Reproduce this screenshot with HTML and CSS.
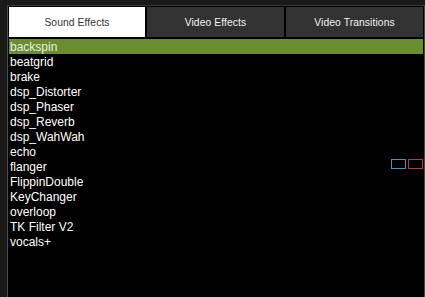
FILE: index.html
```html
<!DOCTYPE html>
<html lang="en">

<head>
    <meta charset="UTF-8">
    <title>Effects</title>
    <link rel="stylesheet" href="styles.css">
</head>

<body>

    <div class="frame">
        <div class="tabs">
            <div class="tab active">Sound Effects</div>
            <div class="tab">Video Effects</div>
            <div class="tab">Video Transitions</div>
        </div>

        <ul class="list">
            <li class="selected">backspin</li>
            <li>beatgrid</li>
            <li>brake</li>
            <li>dsp_Distorter</li>
            <li>dsp_Phaser</li>
            <li>dsp_Reverb</li>
            <li>dsp_WahWah</li>
            <li>echo</li>
            <li>flanger
                <span class="marks">
                    <span class="mark blue"></span>
                    <span class="mark red"></span>
                </span>
            </li>
            <li>FlippinDouble</li>
            <li>KeyChanger</li>
            <li>overloop</li>
            <li>TK Filter V2</li>
            <li>vocals+</li>
        </ul>
    </div>

</body>

</html>
```

FILE: styles.css
```css
html,
body {
    margin: 0;
    height: 100%;
    background-color: #1c1a18;
    overflow: hidden;
}

body {
    font-family: "Liberation Sans", Arial, sans-serif;
    padding-top: 5px;
    padding-left: 7px;
    box-sizing: border-box;
}

.frame {
    height: 100%;
    background-color: #000;
    border-top: 1px solid #3a3836;
    border-left: 1px solid #4c4a48;
    border-right: 1px solid #4c4a48;
    padding: 1px 1px 0 1px;
    box-sizing: border-box;
}

.tabs {
    display: flex;
    gap: 2px;
    height: 30px;
}

.tab {
    flex: 1;
    display: flex;
    align-items: center;
    justify-content: center;
    background-color: #333233;
    color: #f2f2f2;
    font-size: 10.3px;
    letter-spacing: 0.1px;
}

.tab.active {
    flex: 0 0 136px;
    background-color: #fff;
    color: #333;
}

.list {
    list-style: none;
    margin: 2px 0 0 0;
    padding: 0;
}

.list li {
    display: flex;
    height: 14px;
    padding-top: 1px;
    line-height: 15px;
    padding-left: 1px;
    font-size: 12px;
    color: #fff;
}

.list li.selected {
    background-color: #6a8c32;
    color: #e8f0dc;
}

/* small colour boxes at the end of a row */
.marks {
    margin-left: auto;
    display: flex;
    gap: 2px;
    margin-top: -1px;
}

.mark {
    width: 13px;
    height: 8px;
    border: 1px solid;
}

.mark.blue {
    border-color: #5b8db8;
}

.mark.red {
    border-color: #a54540;
}
```
